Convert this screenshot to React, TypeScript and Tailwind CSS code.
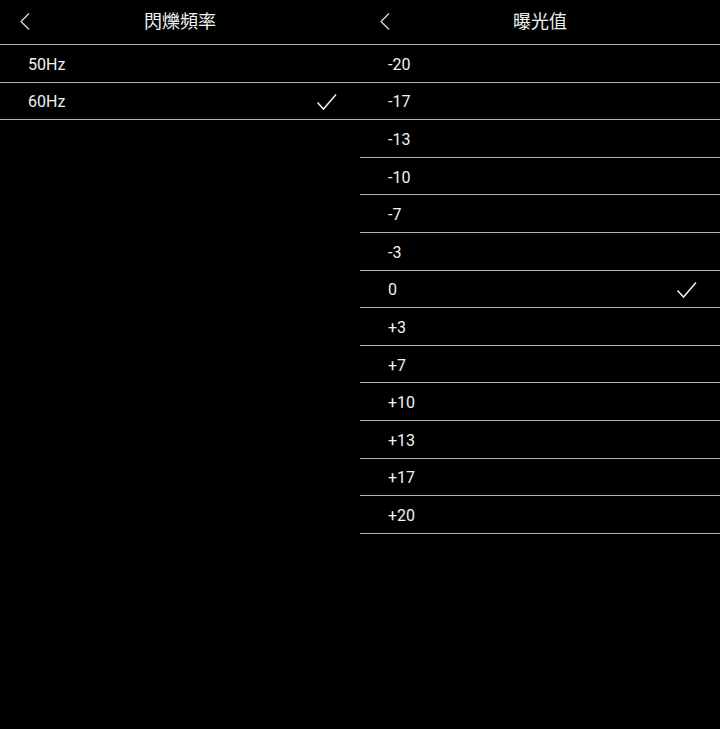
import React from 'react';

type Panel = {
  title: string;
  items: string[];
  selected: string;
};

const panels: Panel[] = [
  { title: '閃爍頻率', items: ['50Hz', '60Hz'], selected: '60Hz' },
  {
    title: '曝光值',
    items: ['-20', '-17', '-13', '-10', '-7', '-3', '0', '+3', '+7', '+10', '+13', '+17', '+20'],
    selected: '0'
  }
];

function BackIcon() {
  return (
    <svg width="12" height="20" viewBox="0 0 12 20" fill="none" className="absolute left-[19px] top-[12px]">
      <path d="M10 1.5 L2 9.5 L10 17.5" stroke="#d8d8d8" strokeWidth="1.3" />
    </svg>
  );
}

function Check() {
  return (
    <svg width="22" height="18" viewBox="0 0 22 18" fill="none" className="mt-[2px]">
      <path d="M1.5 9.5 L7.5 16 L20 1.5" stroke="#f0f0f0" strokeWidth="1.5" />
    </svg>
  );
}

function SettingsPanel({ panel }: { panel: Panel }) {
  return (
    <section className="w-[360px] flex flex-col">
      <header className="relative h-[45px] border-b border-[#b4b4b4] flex items-center justify-center">
        <BackIcon />
        <h1 className="text-[18px] text-[#f2f2f2] leading-none">{panel.title}</h1>
      </header>
      <ul>
        {panel.items.map((item) => (
          <li key={item} className="h-[37.6px] border-b border-[#b4b4b4] flex items-center justify-between pl-[28px] pr-[22px]">
            <span className="text-[16px] text-[#f2f2f2] pt-[3px]">{item}</span>
            {item === panel.selected ? <Check /> : null}
          </li>
        ))}
      </ul>
    </section>
  );
}

export default function App() {
  return (
    <main
      className="w-[720px] h-[729px] bg-black flex overflow-hidden"
      style={{ fontFamily: 'Roboto, "Noto Sans CJK TC", sans-serif' }}
    >
      {panels.map((panel) => (
        <SettingsPanel key={panel.title} panel={panel} />
      ))}
    </main>
  );
}
